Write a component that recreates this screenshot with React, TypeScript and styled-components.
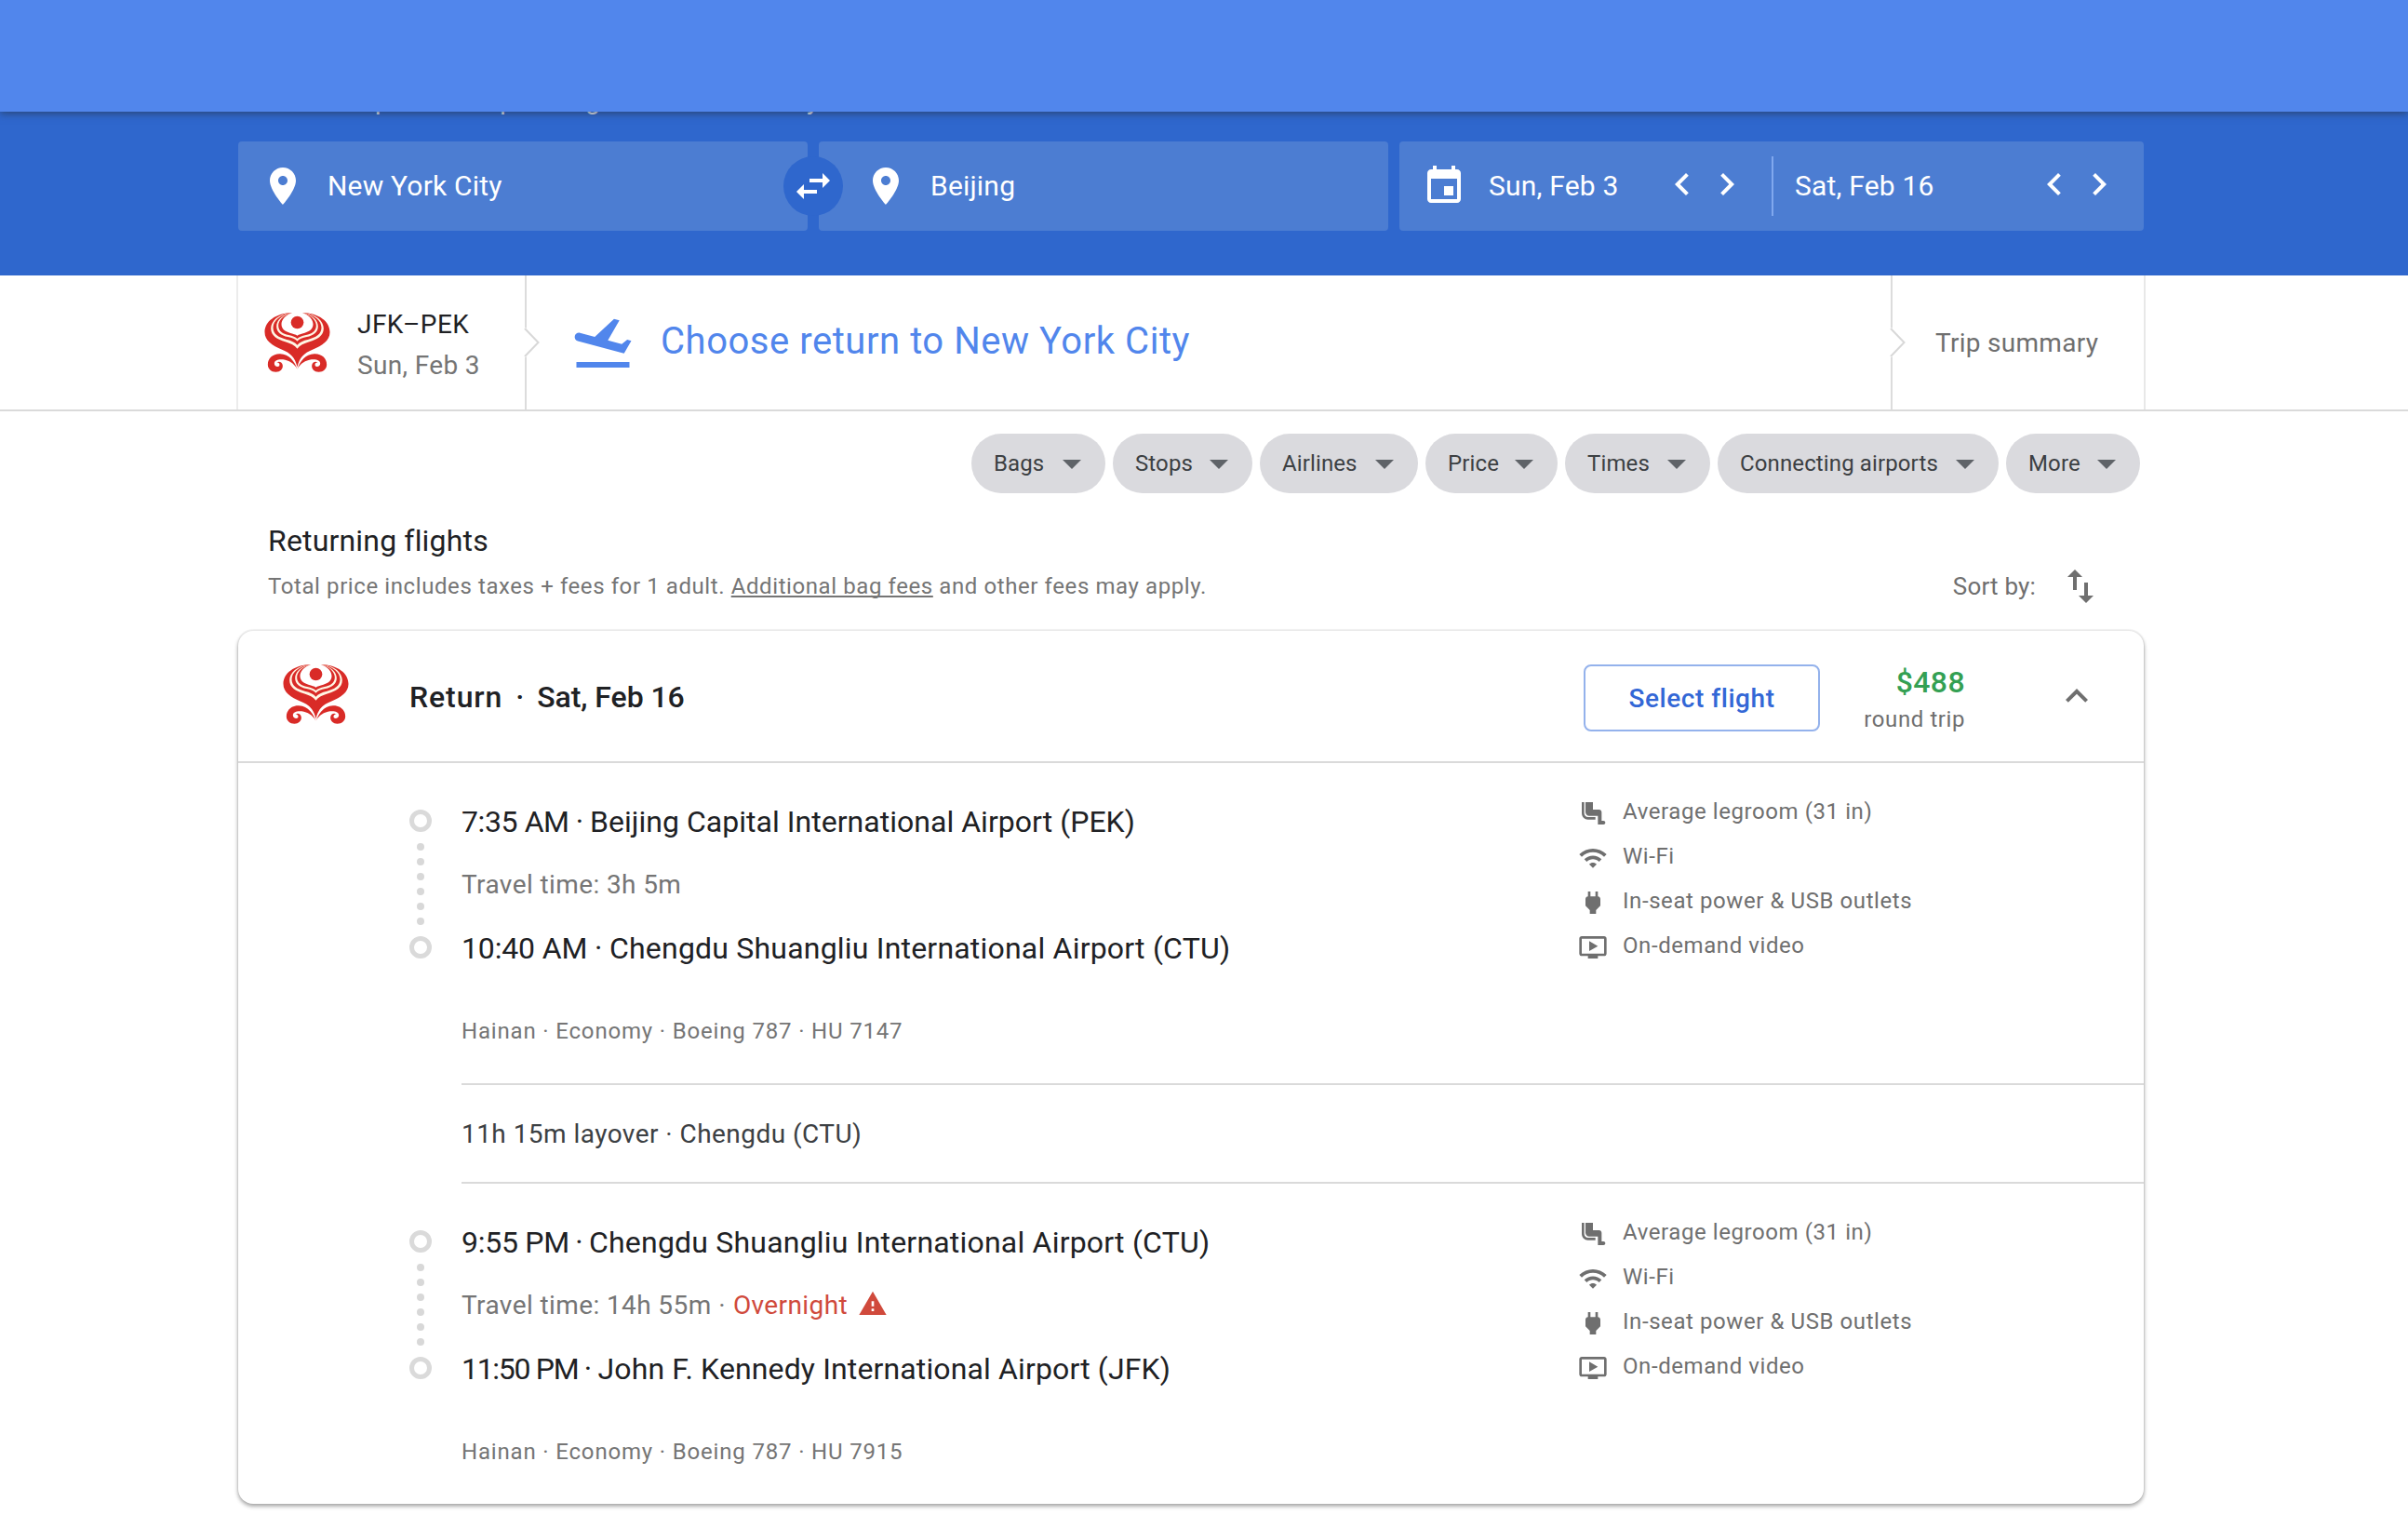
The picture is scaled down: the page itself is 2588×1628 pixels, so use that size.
import React from 'react';
import styled, { createGlobalStyle } from 'styled-components';

const GlobalStyle = createGlobalStyle`
  *, *::before, *::after { box-sizing: border-box; }
  body {
    margin: 0;
    background: #fff;
    color: #202124;
    font-family: Roboto, "Liberation Sans", sans-serif;
    overflow: hidden;
  }
`;

const Page = styled.div`
  width: 2588px;
  height: 1628px;
  overflow: hidden;
  background: #fff;
`;

const Container = styled.div`
  width: 2048px;
  margin-left: 256px;
`;

const Text = styled.span<{ $size?: number; $track?: number; $color?: string; $weight?: number; $line?: number }>`
  font-size: ${p => p.$size ?? 28}px;
  line-height: ${p => p.$line ?? 40}px;
  letter-spacing: ${p => p.$track ?? 0}px;
  color: ${p => p.$color ?? 'inherit'};
  font-weight: ${p => p.$weight ?? 400};
  white-space: nowrap;
`;

/* ---------- header ---------- */

const TopBar = styled.header`
  position: relative;
  z-index: 2;
  height: 120px;
  background: #5186ec;
  box-shadow: 0 2px 8px rgba(40, 60, 90, 0.75);
`;

const SearchBand = styled.section`
  display: flow-root;
  height: 176px;
  background: #2f67cd;
  color: #fff;
`;

const TripOptions = styled.div`
  display: flex;
  margin-top: -24px;
  padding: 0 0 0 32px;
  height: 24px;
`;

const TripOption = styled.span<{ $width: number }>`
  width: ${p => p.$width}px;
  font-size: 28px;
  line-height: 24px;
  letter-spacing: 0.3px;
  white-space: nowrap;
`;

const Fields = styled.div`
  display: flex;
  align-items: center;
  padding-top: 32px;
`;

const Field = styled.div<{ $indent?: number }>`
  display: flex;
  align-items: center;
  gap: 24px;
  width: 612px;
  height: 96px;
  padding-left: ${p => p.$indent ?? 24}px;
  border-radius: 4px;
  background: #4c7dd2;
`;

const SwapButton = styled.button`
  position: relative;
  z-index: 1;
  display: flex;
  align-items: center;
  justify-content: center;
  flex: none;
  width: 64px;
  height: 64px;
  margin: 0 -26px;
  padding: 0;
  border: 0;
  border-radius: 50%;
  background: #2f67cd;
  color: #fff;
`;

const DateField = styled.div`
  display: flex;
  align-items: center;
  width: 800px;
  height: 96px;
  margin-left: 12px;
  border-radius: 4px;
  background: #4c7dd2;
`;

const DateHalf = styled.div<{ $divided?: boolean }>`
  display: flex;
  align-items: center;
  width: 400px;
  height: 64px;
  padding: 0 24px 0 ${p => (p.$divided ? 23 : 24)}px;
  border-left: ${p => (p.$divided ? '2px solid #80a8ee' : '0')};
`;

const DateText = styled(Text)`
  flex: 1;
`;

const CalendarSlot = styled.span`
  display: flex;
  margin-right: 24px;
`;

const Steppers = styled.span`
  display: flex;
  padding-bottom: 4px;
`;

/* ---------- itinerary steps ---------- */

const StepsBar = styled.nav`
  border-bottom: 2px solid #dadada;
`;

const Steps = styled.div`
  display: flex;
  width: 2052px;
  height: 144px;
  margin-left: 254px;
  border-left: 2px solid #ececec;
  border-right: 2px solid #e8e8e8;
`;

const Step = styled.div<{ $width: number; $pad: number; $last?: boolean }>`
  position: relative;
  display: flex;
  align-items: center;
  width: ${p => p.$width}px;
  padding-left: ${p => p.$pad}px;
  padding-top: ${p => (p.$last ? 2 : 0)}px;
  border-right: ${p => (p.$last ? '0' : '2px solid #dcdcdc')};
`;

const StepNotch = styled.svg`
  position: absolute;
  right: -17px;
  top: 56px;
  z-index: 1;
  width: 18px;
  height: 32px;
`;

const StepLines = styled.div`
  display: flex;
  flex-direction: column;
  padding: 6px 0 0 29px;
`;

const StepTitle = styled.div`
  padding: 0 0 2px 26px;
  display: flex;
`;

/* ---------- filters ---------- */

const Chips = styled.div`
  display: flex;
  justify-content: flex-end;
  gap: 8px;
  padding: 24px 4px 0 0;
`;

const Chip = styled.button<{ $width: number }>`
  display: flex;
  align-items: center;
  justify-content: space-between;
  width: ${p => p.$width}px;
  height: 64px;
  padding: 0 12px 0 24px;
  border: 0;
  border-radius: 32px;
  background: #dadade;
  color: #3c4043;
  font: 400 24px/40px Roboto, sans-serif;
  letter-spacing: 0.12px;
  white-space: nowrap;
`;

const Heading = styled.h2`
  margin: 0;
  padding: 31px 0 5px 32px;
  font-size: 32px;
  font-weight: 400;
  line-height: 40px;
  letter-spacing: 0.17px;
`;

const SubRow = styled.div`
  display: flex;
  align-items: center;
  justify-content: space-between;
  height: 48px;
  padding: 0 44px 0 32px;
`;

const SortBy = styled.div`
  display: flex;
  align-items: center;
  gap: 24px;
  color: #6f6f6f;
`;

const FeesLink = styled.a`
  color: inherit;
  text-decoration: underline;
  text-decoration-thickness: 2px;
  text-underline-offset: 2px;
  text-decoration-skip-ink: none;
`;

/* ---------- flight card ---------- */

const Card = styled.article`
  margin-top: 24px;
  border-radius: 16px;
  background: #fff;
  box-shadow: 0 -1px 0 1px rgba(0, 0, 0, 0.04), 0 2px 4px rgba(0, 0, 0, 0.3), 0 3px 5px rgba(0, 0, 0, 0.12);
`;

const CardHeader = styled.header`
  display: flex;
  align-items: center;
  height: 142px;
  padding: 0 48px;
  border-bottom: 2px solid #dadada;
`;

const AirlineSlot = styled.span`
  display: flex;
  padding-bottom: 4px;
`;

const CardTitle = styled.div`
  display: flex;
  flex: 1;
  padding: 2px 0 0 65px;
`;

const TitleDot = styled(Text)`
  width: 37px;
  text-align: center;
`;

const SelectButton = styled.button`
  width: 254px;
  height: 72px;
  margin-top: 4px;
  padding: 2px 0 0;
  border: 2px solid #94b2ec;
  border-radius: 8px;
  background: #fff;
  color: #3367d6;
  font: 500 28px/40px Roboto, sans-serif;
  letter-spacing: 0.55px;
`;

const Price = styled.div`
  display: flex;
  flex-direction: column;
  align-items: flex-end;
  width: 156px;
  margin-right: 96px;
  padding-top: 10px;
`;

const Segment = styled.section`
  display: flex;
  height: 344px;
  padding-left: 184px;
`;

const Timeline = styled.div`
  display: flex;
  flex-direction: column;
  align-items: center;
  width: 24px;
  padding-top: 50px;
`;

const Stop = styled.span`
  width: 24px;
  height: 24px;
  border: 5px solid #dadada;
  border-radius: 50%;
`;

const Dots = styled.span`
  display: flex;
  flex-direction: column;
  gap: 8px;
  padding: 12px 0;
`;

const Dot = styled.span`
  width: 8px;
  height: 8px;
  border-radius: 50%;
  background: #d8d8d8;
`;

const Legs = styled.div`
  display: flex;
  flex-direction: column;
  width: 1232px;
  padding: 43px 0 0 32px;
`;

const StopLine = styled.div`
  display: flex;
  height: 40px;
`;

const StopTime = styled.div<{ $width: number }>`
  display: flex;
  width: ${p => p.$width}px;
`;

const Separator = styled(Text)`
  flex: 1;
  text-align: center;
`;

const TravelTime = styled.div`
  display: flex;
  align-items: center;
  height: 40px;
  margin: 28px 0;
  color: #757575;
`;

const Warning = styled.span`
  display: flex;
  margin-left: 11px;
  padding-bottom: 4px;
  color: #d04a3c;
`;

const FlightInfo = styled.div`
  display: flex;
  padding-top: 49px;
`;

const Amenities = styled.ul`
  margin: 0;
  padding: 28px 0 0;
  list-style: none;
  color: #6f6f6f;
`;

const Amenity = styled.li`
  display: flex;
  align-items: center;
  gap: 16px;
  height: 48px;
`;

const AmenityIcon = styled.span`
  display: flex;
  padding-top: 4px;
`;

const Layover = styled.div`
  display: flex;
  align-items: center;
  height: 108px;
  margin-left: 240px;
  padding-top: 2px;
  border-top: 2px solid #dadada;
  border-bottom: 2px solid #dadada;
`;

/* ---------- icons ---------- */

const paths = {
  pin: 'M12 2C8.13 2 5 5.13 5 9c0 5.25 7 13 7 13s7-7.75 7-13c0-3.87-3.13-7-7-7zm0 9.5c-1.38 0-2.5-1.12-2.5-2.5s1.12-2.5 2.5-2.5 2.5 1.12 2.5 2.5-1.12 2.5-2.5 2.5z',
  swap: 'M6.99 11L3 15l3.99 4v-3H14v-2H6.99v-3zM21 9l-3.99-4v3H10v2h7.01v3L21 9z',
  calendar: 'M17 12h-5v5h5v-5zM16 1v2H8V1H6v2H5c-1.11 0-1.99.9-1.99 2L3 19c0 1.1.89 2 2 2h14c1.1 0 2-.9 2-2V5c0-1.1-.9-2-2-2h-1V1h-2zm3 18H5V8h14v11z',
  left: 'M15.41 7.41L14 6l-6 6 6 6 1.41-1.41L10.83 12z',
  right: 'M10 6L8.59 7.41 13.17 12l-4.58 4.59L10 18l6-6z',
  up: 'M12 8l-6 6 1.41 1.41L12 10.83l4.59 4.58L18 14z',
  down: 'M7 10l5 5 5-5z',
  sort: 'M16 17.01V10h-2v7.01h-3L15 21l4-3.99h-3zM9 3L5 6.99h3V14h2V6.99h3L9 3z',
  takeoff: 'M2.5 19h19v2h-19zm19.57-9.36c-.21-.8-1.04-1.28-1.84-1.06L14.92 10l-6.9-6.43-1.93.51 4.14 7.17-4.97 1.33-1.97-1.54-1.45.39 1.82 3.16.77 1.33 1.6-.43 5.31-1.42 4.35-1.16L21 11.49c.81-.23 1.28-1.05 1.07-1.85z',
  legroom: 'M5 12V3H3v9c0 2.76 2.24 5 5 5h6v-2H8c-1.66 0-3-1.34-3-3zm15.5 6H19v-7c0-1.1-.9-2-2-2h-5V3H6v8c0 1.65 1.35 3 3 3h7v7h4.5c.83 0 1.5-.67 1.5-1.5s-.67-1.5-1.5-1.5z',
  wifi: 'M1 9l2 2c4.97-4.97 13.03-4.97 18 0l2-2C16.93 2.93 7.08 2.93 1 9zm8 8l3 3 3-3c-1.65-1.66-4.34-1.66-6 0zm-4-4l2 2c2.76-2.76 7.24-2.76 10 0l2-2C15.14 9.14 8.87 9.14 5 13z',
  power: 'M16.01 7L16 3h-2v4h-4V3H8v4h-.01C7 6.99 6 7.99 6 8.99v5.49L9.5 18v3h5v-3l3.5-3.51v-5.5c0-1-1-2-1.99-1.99z',
  video: 'M21 3H3c-1.11 0-2 .89-2 2v12c0 1.1.89 2 2 2h5v2h8v-2h5c1.1 0 1.99-.9 1.99-2L23 5c0-1.11-.9-2-2-2zm0 14H3V5h18v12zm-5-6l-7 4V7z',
  warning: 'M1 21h22L12 2 1 21zm12-3h-2v-2h2v2zm0-4h-2v-4h2v4z',
};

function Icon({ name, size = 48, color = 'currentColor', flip }: { name: keyof typeof paths; size?: number; color?: string; flip?: boolean }) {
  return (
    <svg width={size} height={size} viewBox="0 0 24 24" fill={color} aria-hidden>
      <path d={paths[name]} transform={flip ? 'translate(24 0) scale(-1 1)' : undefined} />
    </svg>
  );
}

const swirl =
  'M189 253C179 226 163 206 134 204C110 203 94 219 94 238C94 252 105 262 120 262C134 262 143 252 142 241C141 231 131 226 123 231C130 232 134 237 131 243C125 248 114 243 115 233C117 223 130 220 143 222C163 225 178 234 189 253Z';

function HainanLogo() {
  return (
    <svg width="71" height="64" viewBox="83 71 212 192" aria-hidden>
      <path fill="#d92b27" d="M168 71C120 74 84 98 84 134C84 160 108 178 140 190C168 201 182 216 189 246C196 216 210 201 238 190C270 178 294 160 294 134C294 98 258 74 210 71Z" />
      <path fill="#fff6e4" d="M168 71C128 76 104 98 104 122C104 146 125 157 150 165C168 171 181 176 189 187C197 176 210 171 228 165C253 157 274 146 274 122C274 98 250 76 210 71Z" />
      <path fill="#d92b27" d="M170 71C132 78 111 98 111 119C111 141 130 151 153 157C170 161 182 166 189 175C196 166 208 161 225 157C248 151 267 141 267 119C267 98 246 78 208 71Z" />
      <path fill="#fff6e4" d="M172 71C138 79 122 97 122 115C122 135 138 144 158 149C172 152 183 156 189 163C195 156 206 152 220 149C240 144 256 135 256 115C256 97 240 79 206 71Z" />
      <path fill="#d92b27" d="M173 71C144 79 128 96 128 112C128 131 143 139 161 143C174 146 184 149 189 155C194 149 204 146 217 143C235 139 250 131 250 112C250 96 234 79 205 71Z" />
      <path fill="#fff" d="M175 70C150 79 138 94 138 108C138 124 150 132 165 136C176 139 184 141 189 145C194 141 202 139 213 136C228 132 240 124 240 108C240 94 228 79 203 70Z" />
      <circle cx="189" cy="102.500" r="20.500" fill="#d92b27" />
      <path fill="#d92b27" d={swirl} />
      <path fill="#d92b27" d={swirl} transform="translate(378 0) scale(-1 1)" />
    </svg>
  );
}

function Notch() {
  return (
    <StepNotch viewBox="0 0 18 32" aria-hidden>
      <path d="M0 0H2L16 16L2 32H0Z" fill="#fff" />
      <path d="M1 1L15.500 16L1 31" fill="none" stroke="#d8d8d8" strokeWidth="2" />
    </StepNotch>
  );
}

/* ---------- data ---------- */

const chips: [string, number][] = [
  ['Bags', 144],
  ['Stops', 150],
  ['Airlines', 170],
  ['Price', 142],
  ['Times', 156],
  ['Connecting airports', 302],
  ['More', 144],
];

const amenities: [keyof typeof paths, string][] = [
  ['legroom', 'Average legroom (31 in)'],
  ['wifi', 'Wi-Fi'],
  ['power', 'In-seat power & USB outlets'],
  ['video', 'On-demand video'],
];

type StopData = {
  time: string;
  timeTrack: number;
  timeWidth: number;
  place: string;
  placeTrack: number;
};

type SegmentData = {
  from: StopData;
  to: StopData;
  duration: string;
  overnight?: boolean;
  info: string;
};

const outbound: SegmentData = {
  from: {
    time: '7:35 AM',
    timeTrack: -0.4,
    timeWidth: 138,
    place: 'Beijing Capital International Airport (PEK)',
    placeTrack: 0.03,
  },
  to: {
    time: '10:40 AM',
    timeTrack: -0.15,
    timeWidth: 159,
    place: 'Chengdu Shuangliu International Airport (CTU)',
    placeTrack: 0.2,
  },
  duration: 'Travel time: 3h 5m',
  info: 'Hainan · Economy · Boeing 787 · HU 7147',
};

const onward: SegmentData = {
  from: {
    time: '9:55 PM',
    timeTrack: -0.28,
    timeWidth: 137,
    place: 'Chengdu Shuangliu International Airport (CTU)',
    placeTrack: 0.2,
  },
  to: {
    time: '11:50 PM',
    timeTrack: -1.3,
    timeWidth: 146.5,
    place: 'John F. Kennedy International Airport (JFK)',
    placeTrack: 0.13,
  },
  duration: 'Travel time: 14h 55m',
  overnight: true,
  info: 'Hainan · Economy · Boeing 787 · HU 7915',
};

function StopRow({ stop }: { stop: StopData }) {
  return (
    <StopLine>
      <StopTime $width={stop.timeWidth}>
        <Text $size={32} $track={stop.timeTrack}>{stop.time}</Text>
        <Separator $size={32}>·</Separator>
      </StopTime>
      <Text $size={32} $track={stop.placeTrack}>{stop.place}</Text>
    </StopLine>
  );
}

function FlightSegment({ data }: { data: SegmentData }) {
  return (
    <Segment>
      <Timeline>
        <Stop />
        <Dots>
          {Array.from({ length: 6 }, (_, i) => (
            <Dot key={i} />
          ))}
        </Dots>
        <Stop />
      </Timeline>
      <Legs>
        <StopRow stop={data.from} />
        <TravelTime>
          <Text $track={0.4}>{data.duration}</Text>
          {data.overnight && (
            <>
              <Text $track={0.7}>&nbsp;·&nbsp;</Text>
              <Text $track={0.4} $color="#d04a3c">Overnight</Text>
              <Warning>
                <Icon name="warning" size={32} />
              </Warning>
            </>
          )}
        </TravelTime>
        <StopRow stop={data.to} />
        <FlightInfo>
          <Text $size={24} $track={0.83} $color="#757575">{data.info}</Text>
        </FlightInfo>
      </Legs>
      <Amenities>
        {amenities.map(([icon, label]) => (
          <Amenity key={label}>
            <AmenityIcon>
              <Icon name={icon} size={32} />
            </AmenityIcon>
            <Text $size={24} $track={0.58}>{label}</Text>
          </Amenity>
        ))}
      </Amenities>
    </Segment>
  );
}

export default function App() {
  return (
    <Page>
      <GlobalStyle />
      <TopBar />
      <SearchBand>
        <Container>
          <TripOptions>
            <TripOption $width={226}>Round trip</TripOption>
            <TripOption $width={249}>1 passenger</TripOption>
            <TripOption $width={200}>Economy</TripOption>
          </TripOptions>
          <Fields>
            <Field>
              <Icon name="pin" />
              <Text $size={30} $track={0.2}>New York City</Text>
            </Field>
            <SwapButton aria-label="Swap">
              <Icon name="swap" />
            </SwapButton>
            <Field $indent={48}>
              <Icon name="pin" />
              <Text $size={30} $track={0.2}>Beijing</Text>
            </Field>
            <DateField>
              <DateHalf>
                <CalendarSlot>
                  <Icon name="calendar" />
                </CalendarSlot>
                <DateText $size={30} $track={0.2}>Sun, Feb 3</DateText>
                <Steppers>
                  <Icon name="left" />
                  <Icon name="right" />
                </Steppers>
              </DateHalf>
              <DateHalf $divided>
                <DateText $size={30} $track={0.2}>Sat, Feb 16</DateText>
                <Steppers>
                  <Icon name="left" />
                  <Icon name="right" />
                </Steppers>
              </DateHalf>
            </DateField>
          </Fields>
        </Container>
      </SearchBand>

      <StepsBar>
        <Steps>
          <Step $width={310} $pad={28}>
            <HainanLogo />
            <StepLines>
              <Text $line={44} $track={0.45}>JFK–PEK</Text>
              <Text $line={44} $track={0.35} $color="#757575">Sun, Feb 3</Text>
            </StepLines>
            <Notch />
          </Step>
          <Step $width={1468} $pad={46}>
            <Icon name="takeoff" size={72} color="#5186ec" flip />
            <StepTitle>
              <Text $size={40} $track={0.54} $color="#5186ec">Choose return to New York City</Text>
            </StepTitle>
            <Notch />
          </Step>
          <Step $width={270} $pad={46} $last>
            <Text $track={0.28} $color="#6f6f6f">Trip summary</Text>
          </Step>
        </Steps>
      </StepsBar>

      <Container>
        <Chips>
          {chips.map(([label, width]) => (
            <Chip key={label} $width={width}>
              {label}
              <Icon name="down" color="#5f6368" />
            </Chip>
          ))}
        </Chips>
        <Heading>Returning flights</Heading>
        <SubRow>
          <Text $size={24} $track={0.59} $color="#757575">
            Total price includes taxes + fees for 1 adult. <FeesLink>Additional bag fees</FeesLink> and other fees may apply.
          </Text>
          <SortBy>
            <Text $size={26} $track={0.18}>Sort by:</Text>
            <Icon name="sort" />
          </SortBy>
        </SubRow>

        <Card>
          <CardHeader>
            <AirlineSlot>
              <HainanLogo />
            </AirlineSlot>
            <CardTitle>
              <Text $size={32} $weight={500} $track={0.9}>Return</Text>
              <TitleDot $size={32} $weight={500}>·</TitleDot>
              <Text $size={32} $weight={500} $track={-0.06}>Sat, Feb 16</Text>
            </CardTitle>
            <SelectButton>Select flight</SelectButton>
            <Price>
              <Text $size={32} $weight={500} $track={0.4} $color="#34a053">$488</Text>
              <Text $size={24} $track={0.58} $color="#6f6f6f">round trip</Text>
            </Price>
            <Icon name="up" color="#6f6f6f" />
          </CardHeader>
          <FlightSegment data={outbound} />
          <Layover>
            <Text $track={0.45} $color="#3c4043">11h 15m layover · Chengdu (CTU)</Text>
          </Layover>
          <FlightSegment data={onward} />
        </Card>
      </Container>
    </Page>
  );
}
